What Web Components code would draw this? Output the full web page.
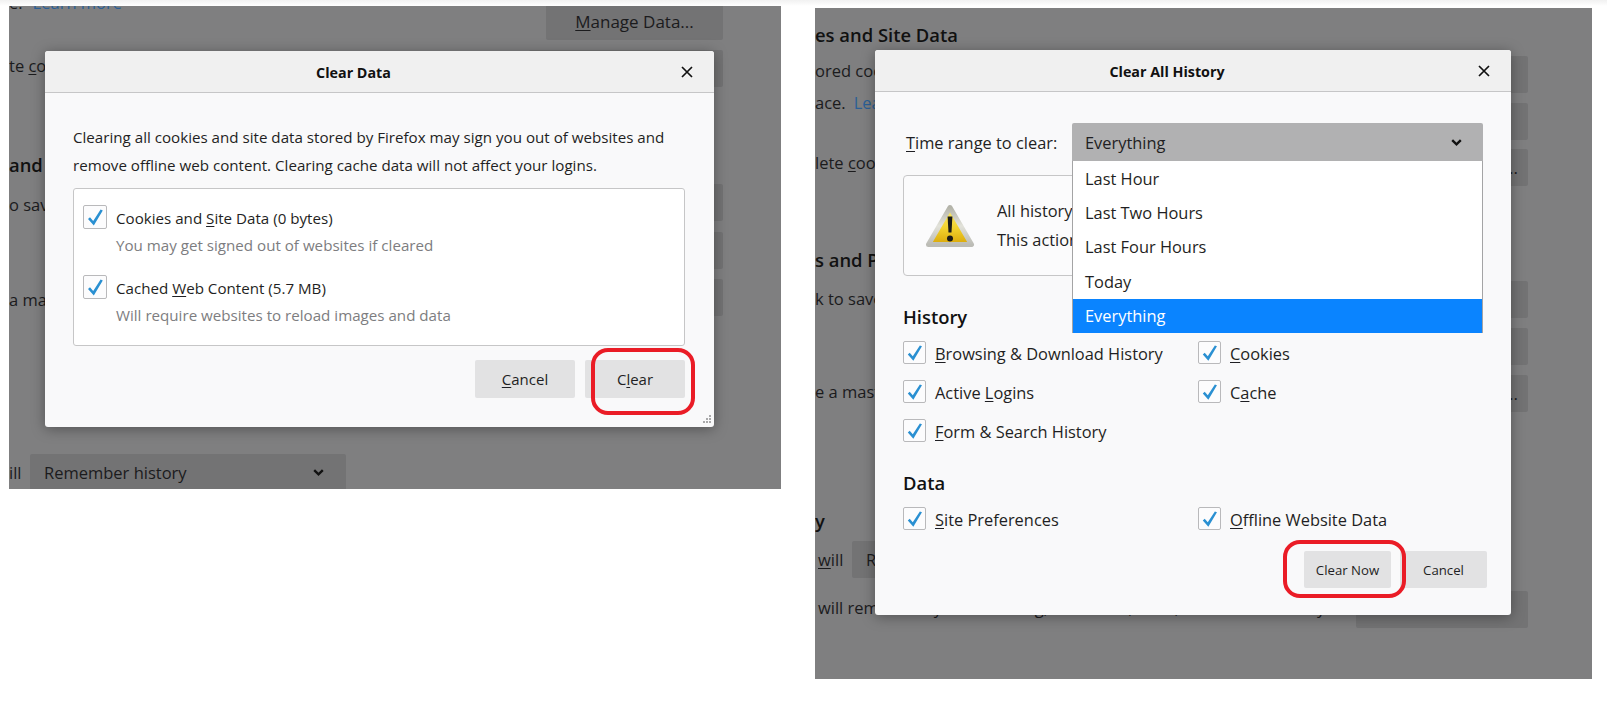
<!DOCTYPE html>
<html>
<head>
<meta charset="utf-8">
<title>Clear Data</title>
<style>
html, body { margin: 0; padding: 0; background: #fff; }
body { font-family: "Open Sans", "Liberation Sans", sans-serif; color: #1f1f23; }
u { text-underline-offset: 2px; text-decoration-thickness: 1px; }
b.link { font-weight: 400; color: #2b5f96; margin-left: 10px; }
[slot="btns"] { display: flex; flex-direction: column; align-items: flex-end; }
</style>
</head>
<body>

<shot-board>
  <shot-panel style="--w:772px; --h:483px; --pad:58px">
    <div slot="text">
      <dim-line style="margin-top:-14px"><span>e:</span><b class="link">Learn more</b></dim-line>
      <dim-line style="margin-top:41px"><span>te <u>c</u>o</span></dim-line>
      <dim-line style="margin-top:77px" heavy><span>and P</span></dim-line>
      <dim-line style="margin-top:18px"><span>o sav</span></dim-line>
      <dim-line style="margin-top:73px"><span>a mas</span></dim-line>
      <dim-line style="margin-top:143px"><span style="width:21px">ill</span><dim-select style="width:316px">Remember history</dim-select></dim-line>
    </div>
    <div slot="btns">
      <dim-btn style="margin-top:-3px; width:177px"><span><u>M</u>anage Data...</span></dim-btn>
      <dim-btn style="margin-top:10px; width:194px"></dim-btn>
      <dim-btn style="margin-top:97px; width:100px"></dim-btn>
      <dim-btn style="margin-top:11px; width:100px"></dim-btn>
      <dim-btn style="margin-top:10px; width:100px"></dim-btn>
    </div>

    <fx-dialog heading="Clear Data" grip style="left:36px; top:45px; width:669px; height:376px">
      <clear-data-form></clear-data-form>
    </fx-dialog>
    <red-ring style="left:582px; top:342px; width:104px; height:67px"></red-ring>
  </shot-panel>

  <shot-panel style="--w:777px; --h:671px; --pad:64px; margin-left:34px; margin-top:2px">
    <div slot="text">
      <dim-line style="margin-top:16px" heavy><span>es and Site Data</span></dim-line>
      <dim-line style="margin-top:14px"><span>ored coo</span></dim-line>
      <dim-line style="margin-top:10px"><span>ace.</span><b class="link" style="margin-left:8px">Lea</b></dim-line>
      <dim-line style="margin-top:38px"><span>lete <u>c</u>oo</span></dim-line>
      <dim-line style="margin-top:75px" heavy><span>s and P</span></dim-line>
      <dim-line style="margin-top:17px"><span>k to save</span></dim-line>
      <dim-line style="margin-top:71px"><span>e a mast</span></dim-line>
      <dim-line style="margin-top:107px" heavy><span>y</span></dim-line>
      <dim-line style="margin-top:9px"><span style="width:34px; margin-left:3px"><u>w</u>ill</span><dim-select style="width:300px">R</dim-select></dim-line>
      <dim-line style="margin-top:19px"><span style="margin-left:3px">will remember your browsing, download, form, and search history</span></dim-line>
    </div>
    <div slot="btns">
      <dim-btn style="margin-top:48px; width:100px"></dim-btn>
      <dim-btn style="margin-top:10px; width:100px"></dim-btn>
      <dim-btn style="margin-top:9px; width:100px; justify-content:flex-end; padding-right:10px; box-sizing:border-box">...</dim-btn>
      <dim-btn style="margin-top:95px; width:100px"></dim-btn>
      <dim-btn style="margin-top:10px; width:100px"></dim-btn>
      <dim-btn style="margin-top:10px; width:100px; justify-content:flex-end; padding-right:10px; box-sizing:border-box">...</dim-btn>
      <dim-btn style="margin-top:179px; width:172px"></dim-btn>
    </div>

    <fx-dialog heading="Clear All History" style="left:60px; top:42px; width:636px; height:565px">
      <clear-history-form></clear-history-form>
    </fx-dialog>
    <red-ring style="left:468px; top:532px; width:123px; height:58px"></red-ring>
  </shot-panel>
</shot-board>

<script>
const TICK = `<svg width="100%" height="100%" viewBox="0 0 24 24"><path fill="#2a90d2" d="M5 14 7 12.2 10.2 16 17.6 4.6 19.8 5.6 10.8 20.6Z"/></svg>`;
const CHEVRON = `<svg width="11" height="7" viewBox="0 0 11 7"><path d="M1.2 1.2 5.5 5.3 9.8 1.2" fill="none" stroke="#111" stroke-width="2.4"/></svg>`;

class ShotBoard extends HTMLElement {
  constructor() {
    super();
    this.attachShadow({ mode: "open" });
    this.shadowRoot.innerHTML = `
      <style>
        :host { display: flex; align-items: flex-start; width: 1607px; height: 701px; box-sizing: border-box; padding: 6px 0 0 9px; overflow: hidden; }
        .fade { position: absolute; left: 0; top: 0; width: 1607px; height: 6px; background: linear-gradient(#f1f1f1, #fff); }
      </style>
      <div class="fade"></div>
      <slot></slot>`;
  }
}

class ShotPanel extends HTMLElement {
  constructor() {
    super();
    this.attachShadow({ mode: "open" });
    this.shadowRoot.innerHTML = `
      <style>
        :host { display: block; position: relative; flex: none; width: var(--w); height: var(--h); background: #7f7f80; overflow: hidden; }
        .back { display: flex; justify-content: space-between; height: 100%; padding-right: var(--pad); }
        .col { display: flex; flex-direction: column; align-items: flex-end; }
        .col.left { align-items: flex-start; }
      </style>
      <div class="back">
        <div class="col left"><slot name="text"></slot></div>
        <div class="col"><slot name="btns"></slot></div>
      </div>
      <slot></slot>`;
  }
}

class DimLine extends HTMLElement {
  constructor() {
    super();
    this.attachShadow({ mode: "open" });
    this.shadowRoot.innerHTML = `
      <style>
        :host { display: flex; align-items: center; min-height: 22px; font-size: 16.5px; line-height: 22px; color: #1b1b1d; white-space: nowrap; }
        :host([heavy]) { font-weight: 600; font-size: 18.4px; color: #111; }
        ::slotted(span) { flex: none; }
      </style>
      <slot></slot>`;
  }
}

class DimBtn extends HTMLElement {
  constructor() {
    super();
    this.attachShadow({ mode: "open" });
    this.shadowRoot.innerHTML = `
      <style>
        :host { display: flex; flex: none; align-items: center; justify-content: center; height: 37px; background: #737374; border-radius: 2px; font-size: 17px; color: #1b1b1d; white-space: nowrap; }
      </style>
      <slot></slot>`;
  }
}

class DimSelect extends HTMLElement {
  constructor() {
    super();
    this.attachShadow({ mode: "open" });
    this.shadowRoot.innerHTML = `
      <style>
        :host { display: flex; flex: none; align-items: center; justify-content: space-between; box-sizing: border-box; height: 37px; padding: 0 22px 0 14px; background: #737374; border-radius: 2px; }
      </style>
      <span><slot></slot></span>${CHEVRON}`;
  }
}

class FxDialog extends HTMLElement {
  constructor() {
    super();
    this.attachShadow({ mode: "open" });
    const grip = this.hasAttribute("grip")
      ? `<svg class="grip" width="10" height="10" viewBox="0 0 10 10" fill="#a9a9aa"><rect x="7" y="0" width="2" height="2"/><rect x="4" y="3" width="2" height="2"/><rect x="7" y="3" width="2" height="2"/><rect x="1" y="6" width="2" height="2"/><rect x="4" y="6" width="2" height="2"/><rect x="7" y="6" width="2" height="2"/></svg>`
      : "";
    this.shadowRoot.innerHTML = `
      <style>
        :host { display: flex; flex-direction: column; position: absolute; box-sizing: border-box; background: #f9f9fa; border-radius: 3px; box-shadow: 0 2px 14px rgba(0,0,0,.35); overflow: hidden; color: #1f1f23; }
        header { flex: none; display: flex; align-items: center; justify-content: center; position: relative; box-sizing: content-box; height: 39px; padding: 2px 52px 0 0; background: #f0f0f0; border-bottom: 1px solid #c6c6c7; font-size: 14.3px; font-weight: 700; color: #111; }
        svg.close { position: absolute; right: 21px; top: 15px; }
        svg.grip { position: absolute; right: 2px; bottom: 2px; }
      </style>
      <header><span id="heading"></span>
        <svg class="close" width="12" height="12" viewBox="0 0 12 12"><path d="M1 1 11 11M11 1 1 11" stroke="#111" stroke-width="1.7"/></svg>
      </header>
      <slot></slot>
      ${grip}`;
    this.shadowRoot.querySelector("#heading").textContent = this.getAttribute("heading");
  }
}

class FxCheck extends HTMLElement {
  constructor() {
    super();
    this.attachShadow({ mode: "open" });
    this.shadowRoot.innerHTML = `
      <style>
        :host { display: flex; align-items: center; gap: 9px; height: var(--box, 23px); white-space: nowrap; }
        .box { flex: none; box-sizing: border-box; width: var(--box, 23px); height: var(--box, 23px); border: 1px solid #b9b9bb; border-radius: 2px; background: #fcfcfd; }
        .box svg { display: block; margin: -1px; width: var(--box, 23px); height: var(--box, 23px); }
        span { padding-top: 2px; }
      </style>
      <div class="box">${TICK}</div><span><slot></slot></span>`;
  }
}

class FxButton extends HTMLElement {
  constructor() {
    super();
    this.attachShadow({ mode: "open" });
    this.shadowRoot.innerHTML = `
      <style>
        :host { display: flex; flex: none; align-items: center; justify-content: center; background: #e2e2e3; border-radius: 2px; font-size: 14px; color: #1f1f23; }
      </style>
      <slot></slot>`;
  }
}

class RedRing extends HTMLElement {
  constructor() {
    super();
    this.attachShadow({ mode: "open" });
    this.shadowRoot.innerHTML = `
      <style>
        :host { display: block; position: absolute; box-sizing: border-box; border: 4px solid #ea1c26; border-radius: 17px; }
      </style>`;
  }
}

class ClearDataForm extends HTMLElement {
  constructor() {
    super();
    this.attachShadow({ mode: "open" });
    this.shadowRoot.innerHTML = `
      <style>
        :host { display: block; padding: 30px 29px 0 28px; font-size: 15.15px; }
        p { margin: 0; line-height: 28px; white-space: nowrap; }
        .box { box-sizing: border-box; height: 158px; margin-top: 9px; padding: 16px 0 0 9px; background: #fff; border: 1px solid #c6c6c7; border-radius: 3px; --box: 24px; }
        .item { height: 51px; margin-bottom: 19px; }
        .hint { margin: 5px 0 0 33px; line-height: 22px; color: #7d7d80; white-space: nowrap; }
        .actions { display: flex; justify-content: flex-end; gap: 10px; margin-top: 14px; }
        fx-button { width: 100px; height: 38px; font-size: 15px; }
        u { text-underline-offset: 2px; text-decoration-thickness: 1px; }
      </style>
      <p>Clearing all cookies and site data stored by Firefox may sign you out of websites and<br>remove offline web content. Clearing cache data will not affect your logins.</p>
      <div class="box">
        <div class="item">
          <fx-check>Cookies and <u>S</u>ite Data (0 bytes)</fx-check>
          <div class="hint">You may get signed out of websites if cleared</div>
        </div>
        <div class="item">
          <fx-check>Cached <u>W</u>eb Content (5.7 MB)</fx-check>
          <div class="hint">Will require websites to reload images and data</div>
        </div>
      </div>
      <div class="actions">
        <fx-button><span><u>C</u>ancel</span></fx-button>
        <fx-button><span>C<u>l</u>ear</span></fx-button>
      </div>`;
  }
}

class ClearHistoryForm extends HTMLElement {
  constructor() {
    super();
    this.attachShadow({ mode: "open" });
    this.shadowRoot.innerHTML = `
      <style>
        :host { display: block; padding: 31px 28px 0; font-size: 16.4px; }
        .range { display: flex; align-items: center; justify-content: space-between; padding-left: 3px; }
        .select { position: relative; width: 411px; height: 38px; box-sizing: border-box; display: flex; align-items: center; justify-content: space-between; padding: 0 21px 0 13px; background: #b1b1b2; border-radius: 2px 2px 0 0; }
        .menu { position: absolute; left: 0; top: 38px; right: 0; box-sizing: border-box; height: 172px; padding-top: 1px; background: #fff; border: solid #a4a4a5; border-width: 0 1px; z-index: 2; }
        .menu div { height: 34.2px; line-height: 34.2px; padding-left: 12px; box-sizing: border-box; white-space: nowrap; }
        .menu div.on { height: 34.2px; background: #0a84ff; color: #fff; }
        .warn { display: flex; align-items: center; gap: 22px; box-sizing: border-box; height: 101px; margin-top: 14px; padding: 0 0 2px 21px; background: #fbfbfc; border: 1px solid #c6c6c7; border-radius: 4px; }
        .warn svg { margin-top: 2px; }
        .warn p { margin: 0; line-height: 29px; }
        h2 { margin: 28px 0 11px; font-size: 18.4px; line-height: 26px; font-weight: 600; color: #111; }
        h2.data { margin-top: 28px; }
        .grid { display: grid; grid-template-columns: 295px 1fr; row-gap: 16px; }
        .actions { display: flex; justify-content: flex-end; gap: 9px; margin: 21px -4px 0 0; }
        fx-button { width: 87px; height: 37px; font-size: 13.2px; }
        u { text-underline-offset: 2px; text-decoration-thickness: 1px; }
      </style>
      <div class="range">
        <span><u>T</u>ime range to clear:</span>
        <div class="select">
          <span>Everything</span>${CHEVRON}
          <div class="menu">
            <div>Last Hour</div>
            <div>Last Two Hours</div>
            <div>Last Four Hours</div>
            <div>Today</div>
            <div class="on">Everything</div>
          </div>
        </div>
      </div>
      <div class="warn">
        <svg width="50" height="46" viewBox="0 0 50 46">
          <defs>
            <linearGradient id="gold" x1="0" y1="0" x2="0" y2="1"><stop offset="0" stop-color="#fbeb72"/><stop offset=".55" stop-color="#f2d32e"/><stop offset="1" stop-color="#d9a608"/></linearGradient>
            <linearGradient id="rim" x1="0" y1="0" x2="0" y2="1"><stop offset="0" stop-color="#b4b4aa"/><stop offset=".5" stop-color="#e2e2da"/><stop offset="1" stop-color="#bcbcb6"/></linearGradient>
          </defs>
          <path d="M25 4.5 46.5 41.5H3.5Z" fill="url(#gold)" stroke="url(#rim)" stroke-width="5" stroke-linejoin="round"/>
          <path d="M22.6 13.5h4.8l-.9 16h-3Z" fill="#1c1c18"/>
          <circle cx="25" cy="35.5" r="3" fill="#1c1c18"/>
        </svg>
        <p>All history<br>This action</p>
      </div>
      <h2>History</h2>
      <div class="grid">
        <fx-check><u>B</u>rowsing &amp; Download History</fx-check>
        <fx-check><u>C</u>ookies</fx-check>
        <fx-check>Active <u>L</u>ogins</fx-check>
        <fx-check>C<u>a</u>che</fx-check>
        <fx-check><u>F</u>orm &amp; Search History</fx-check>
      </div>
      <h2 class="data">Data</h2>
      <div class="grid">
        <fx-check><u>S</u>ite Preferences</fx-check>
        <fx-check><u>O</u>ffline Website Data</fx-check>
      </div>
      <div class="actions">
        <fx-button>Clear Now</fx-button>
        <fx-button>Cancel</fx-button>
      </div>`;
  }
}

customElements.define("shot-board", ShotBoard);
customElements.define("shot-panel", ShotPanel);
customElements.define("dim-line", DimLine);
customElements.define("dim-btn", DimBtn);
customElements.define("dim-select", DimSelect);
customElements.define("fx-dialog", FxDialog);
customElements.define("fx-check", FxCheck);
customElements.define("fx-button", FxButton);
customElements.define("red-ring", RedRing);
customElements.define("clear-data-form", ClearDataForm);
customElements.define("clear-history-form", ClearHistoryForm);
</script>
</body>
</html>
